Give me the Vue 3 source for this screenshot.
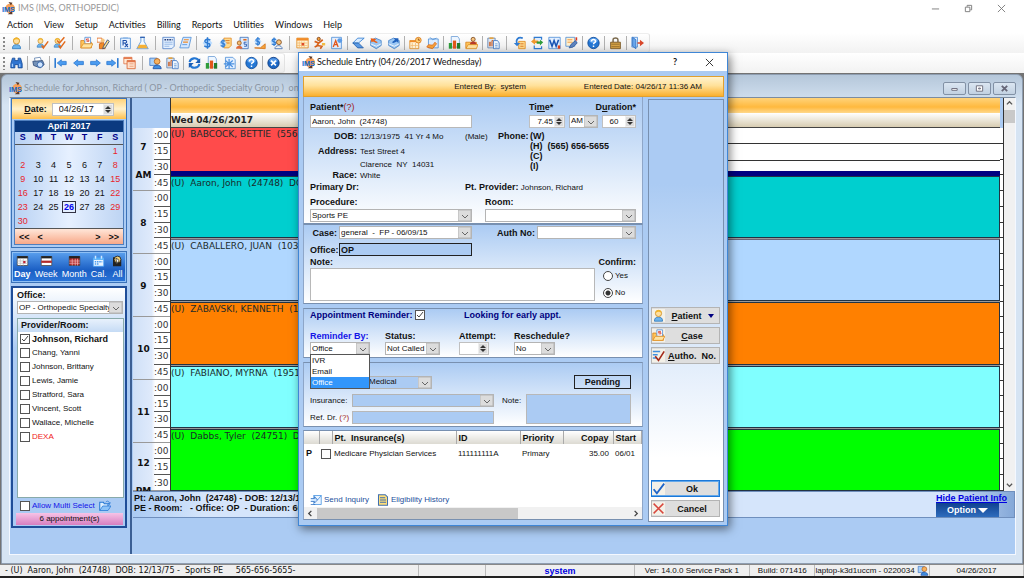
<script setup>
import { ref } from 'vue'

const menus = ['Action', 'View', 'Setup', 'Activities', 'Billing', 'Reports', 'Utilities', 'Windows', 'Help']
const mainTools = [
  'person', '=', 'personcheck', 'doublecheck', '=', 'folder', 'personpen', '-', 'rx', 'flask', '=', 'docabc', 'docs', '-',
  'dollar', 'dollardoc', 'dollarcard', 'dollarhand', 'dollarperson', '=', 'calendar', 'figure', 'adoc', '-',
  'eraser', 'boxin', 'boxout', '-', 'calclock', 'calpen', '-', 'chart', 'folderperson', '-', 'cliptable', '=',
  'note', 'swap', 'word', 'docpen', '-', 'help', '-', 'lock', '-', 'door'
]
const navTools = [
  'binoculars', '-', 'printer', '-', 'first', 'prev', 'next', 'last', 'windows', '=', 'personview', 'cliptable', '-',
  'refresh', 'chart', 'snow', '-', 'help', '-', 'close'
]
const weekdays = ['S', 'M', 'T', 'W', 'T', 'F', 'S']
const weeks = [
  ['', '', '', '', '', '', 1],
  [2, 3, 4, 5, 6, 7, 8],
  [9, 10, 11, 12, 13, 14, 15],
  [16, 17, 18, 19, 20, 21, 22],
  [23, 24, 25, 26, 27, 28, 29],
  [30, '', '', '', '', '', '']
]
const views = [
  { name: 'Day', icon: 'vday' },
  { name: 'Week', icon: 'vweek' },
  { name: 'Month', icon: 'vmonth' },
  { name: 'Cal.', icon: 'vcal' },
  { name: 'All', icon: 'vall' }
]
const providers = ref([
  { name: 'Johnson, Richard', on: true },
  { name: 'Chang, Yanni', on: false },
  { name: 'Johnson, Brittany', on: false },
  { name: 'Lewis, Jamie', on: false },
  { name: 'Stratford, Sara', on: false },
  { name: 'Vincent, Scott', on: false },
  { name: 'Wallace, Michelle', on: false },
  { name: 'DEXA', on: false, red: true }
])
const hours = [
  { h: '7', sub: 'AM', q: [':00', ':15', ':30', ':45'] },
  { h: '8', q: [':00', ':15', ':30', ':45'] },
  { h: '9', q: [':00', ':15', ':30', ':45'] },
  { h: '10', q: [':00', ':15', ':30', ':45'] },
  { h: '11', q: [':00', ':15', ':30', ':45'] },
  { h: '12', sub: 'PM', q: [':00', ':15', ':30'] }
]
const slots = [
  { cls: 'teal', text: '(U)\u00a0 Aaron, John\u00a0 (24748)\u00a0 DOB: 12/13/75' },
  { cls: 'sky', text: '(U)\u00a0 CABALLERO, JUAN\u00a0 (10345)' },
  { cls: 'orange', text: '(U)\u00a0 ZABAVSKI, KENNETH\u00a0 (1024)' },
  { cls: 'cyan', text: '(U)\u00a0 FABIANO, MYRNA\u00a0 (19515)' },
  { cls: 'green', text: '(U)\u00a0 Dabbs, Tyler\u00a0 (24751)\u00a0 DOB: 10/01/82' }
]
const confirm = ref('No')
const reminder = ref('Office')
const reminderOptions = ['IVR', 'Email', 'Office']
</script>

<template>
  <div class="app">
    <svg class="defs" aria-hidden="true">
      <defs>
        <symbol id="logo" viewBox="0 0 16 16">
          <circle cx="10" cy="8" r="6" fill="#f6a05a" />
          <path d="M8 0l5 1-2 3zM7 15l6 0-1-4z" fill="#5b3a2a" />
          <text x="0" y="12" font-family="Liberation Sans, sans-serif" font-weight="700" font-size="9" fill="#1268cc">IMS</text>
        </symbol>
        <symbol id="person" viewBox="0 0 16 16">
          <path d="M3 15c0-4 2-5 5-5s5 1 5 5z" fill="#6db4ec" stroke="#2d78bd" />
          <circle cx="8" cy="5.5" r="3.8" fill="#ffdf9e" stroke="#c98a1d" />
          <path d="M4 5c0-5 8-5 8 0-2-2-5-2-8 0z" fill="#f2b52a" />
        </symbol>
        <symbol id="personcheck" viewBox="0 0 16 16">
          <use href="#person" width="13" height="15" x="-1" y="0" />
          <path d="M7 11l2 3 6-8" fill="none" stroke="#e2691b" stroke-width="1.8" />
        </symbol>
        <symbol id="doublecheck" viewBox="0 0 16 16">
          <use href="#person" width="13" height="15" x="-1" y="0" />
          <path d="M7 11l2 3 6-8M5 5l3 3 6-7" fill="none" stroke="#e2691b" stroke-width="1.8" />
        </symbol>
        <symbol id="folder" viewBox="0 0 16 16">
          <path d="M1 14V5h4l1 2h8v7z" fill="#ffc65a" stroke="#d9831c" />
          <path d="M6 1h7v8H6z" fill="#fff" stroke="#4f8fd6" />
          <path d="M11 3H8v1.500h3V6H8" fill="none" stroke="#d63b2b" />
          <path d="M1 14l3-5h12l-3 5z" fill="#ffe3a0" stroke="#e08e23" />
        </symbol>
        <symbol id="personpen" viewBox="0 0 16 16">
          <path d="M0 2h6v5H0z" fill="#fff" stroke="#e2691b" />
          <path d="M3 15V9l5-2 2 8z" fill="#f08b28" stroke="#c35a12" />
          <circle cx="7" cy="5" r="2.500" fill="#f7c47e" />
          <path d="M8 12l5-8 2 2-5 8-3 1z" fill="#ffe08a" stroke="#2a4577" />
        </symbol>
        <symbol id="rx" viewBox="0 0 16 16">
          <path d="M2 2h12v13H2z" fill="#e9f3ff" stroke="#4f8fd6" />
          <path d="M5 1h6v2H5z" fill="#8fb9e8" />
          <path d="M5 11V5h3c2 0 2 3 0 3H5m2 0l4 5m0-4l-4 4" fill="none" stroke="#1b4da8" stroke-width="1.300" />
        </symbol>
        <symbol id="flask" viewBox="0 0 16 16">
          <path d="M6 1v5L1 15h14L10 6V1z" fill="#f3faff" stroke="#4f8fd6" />
          <path d="M4 10h8l2.500 4.500h-13z" fill="#f6b135" />
          <path d="M5 1h6" stroke="#2d5fb0" stroke-width="1.500" />
        </symbol>
        <symbol id="docabc" viewBox="0 0 16 16">
          <path d="M1 1h14v11l-3 3H1z" fill="#e4f0ff" stroke="#4f7fc6" />
          <path d="M3 4h10" stroke="#273e78" stroke-width="2" stroke-dasharray="2 1" />
          <path d="M3 7h10M3 9.500h10M3 12h6" stroke="#86aee2" />
        </symbol>
        <symbol id="docs" viewBox="0 0 16 16">
          <path d="M5 1h10l-3 13H1z" fill="#d5e8ff" stroke="#4f8fd6" />
          <path d="M6 4h6M5 7h6" stroke="#f08b28" stroke-width="1.500" />
          <path d="M4 10h6" stroke="#4f8fd6" />
        </symbol>
        <symbol id="dollar" viewBox="0 0 16 16">
          <path d="M8 1l6 7-6 7-6-7z" fill="#b9dcff" />
          <path d="M11.500 4.500C8 2 4 4 5 6.500c1 2 6 1 6 4s-4 3-7 1M8 1v14" fill="none" stroke="#2f7bd2" stroke-width="1.800" />
        </symbol>
        <symbol id="dollardoc" viewBox="0 0 16 16">
          <path d="M6 2h9v9l-3 3H6z" fill="#ffd98b" stroke="#e28a20" />
          <path d="M8 5h5M8 8h5" stroke="#d66b18" />
          <use href="#dollar" width="12" height="13" x="-1" y="2" />
        </symbol>
        <symbol id="dollarcard" viewBox="0 0 16 16">
          <path d="M5 1h10v14H5z" fill="#dcecff" stroke="#3c70b8" />
          <path d="M9 4h4" stroke="#e2691b" stroke-width="2" />
          <circle cx="4" cy="8" r="2.500" fill="#f4bb70" stroke="#9f5a1b" />
          <path d="M0 15c0-5 8-5 8 0z" fill="#e06a3a" />
          <path d="M13 7h-3v2.500h3V12h-3" fill="none" stroke="#1b4da8" />
        </symbol>
        <symbol id="dollarhand" viewBox="0 0 16 16">
          <use href="#dollar" width="12" height="12" x="0" y="0" />
          <path d="M2 14h7l6-5v6z" fill="#f6a33a" stroke="#d4741b" />
        </symbol>
        <symbol id="dollarperson" viewBox="0 0 16 16">
          <use href="#dollar" width="12" height="13" x="-1" y="0" />
          <circle cx="11" cy="7" r="3" fill="#f7c47e" stroke="#77461d" />
          <path d="M6 15c0-5 9-5 9 0z" fill="#f2f2f2" stroke="#3b6bb0" />
        </symbol>
        <symbol id="calendar" viewBox="0 0 16 16">
          <path d="M1 2h14v12H1z" fill="#fff4d8" stroke="#e28a20" />
          <path d="M1 3.500h14" stroke="#f08b28" stroke-width="3" />
          <path d="M4 6v8M7 6v8M10 6v8M1 8h13M1 11h13" stroke="#f5bd73" />
          <path d="M7 8h3v3H7z" fill="#e04b2b" />
        </symbol>
        <symbol id="figure" viewBox="0 0 16 16">
          <circle cx="7" cy="3" r="2" fill="#f6a33a" stroke="#7b3b12" />
          <path d="M2 6l5 2 5-4M7 8l-2 3 6 1-2 3M2 13l4-2" fill="none" stroke="#d8621b" stroke-width="2" />
          <path d="M11 8h4v3h-4z" fill="#f3bd43" />
        </symbol>
        <symbol id="adoc" viewBox="0 0 16 16">
          <path d="M2 1h12v14H2z" fill="#e4f0ff" stroke="#4f8fd6" />
          <path d="M4 13l3-8 3 8M5 10h4" fill="none" stroke="#e2561b" stroke-width="1.600" />
          <circle cx="12" cy="5" r="3" fill="#5b9be6" />
        </symbol>
        <symbol id="eraser" viewBox="0 0 16 16">
          <path d="M7 2h8L8 8H1z" fill="#d9ecff" stroke="#2f7bd2" />
          <path d="M1 8h7l6 6H7z" fill="#5b9be6" stroke="#245ea8" />
        </symbol>
        <symbol id="boxin" viewBox="0 0 16 16">
          <path d="M2 5l6-3 7 3v6l-6 4-7-4z" fill="#9cc8f5" stroke="#4682c8" />
          <path d="M2 9l7 3 6-3" fill="none" stroke="#fff" />
          <path d="M2 2l7 1-2 2 4 2-2 1-4-2-2 1z" fill="#e8601b" />
        </symbol>
        <symbol id="boxout" viewBox="0 0 16 16">
          <path d="M2 5l6-3 7 3v6l-6 4-7-4z" fill="#9cc8f5" stroke="#4682c8" />
          <path d="M2 9l7 3 6-3" fill="none" stroke="#fff" />
          <path d="M14 2l-6 0 2 2-4 3 2 1 4-2 2 2z" fill="#1f61bd" />
        </symbol>
        <symbol id="calclock" viewBox="0 0 16 16">
          <path d="M1 5h11v10H1z" fill="#fff4d8" stroke="#e28a20" />
          <path d="M1 6h11" stroke="#f08b28" stroke-width="2" />
          <path d="M4 8v6M8 8v6M2 11h9" stroke="#f5bd73" />
          <circle cx="11.500" cy="4.500" r="3.500" fill="#ffcf70" stroke="#d9751b" />
          <path d="M11.500 2.500v2h2" fill="none" stroke="#8b3a10" />
        </symbol>
        <symbol id="calpen" viewBox="0 0 16 16">
          <path d="M3 3h12v11H3z" fill="#dcecff" stroke="#4f8fd6" />
          <path d="M5 1l3 3 5-2" fill="none" stroke="#4f8fd6" />
          <path d="M1 13c3-7 6 2 10-6l2 2-5 6z" fill="#f6a33a" stroke="#e06a1b" />
        </symbol>
        <symbol id="chart" viewBox="0 0 16 16">
          <path d="M4 0h8l2 3v10H4z" fill="#eef6ff" stroke="#6f9fd6" />
          <path d="M1 8h4v7H1z" fill="#2f9c3a" />
          <path d="M6 5h4v10H6z" fill="#e2561b" />
          <path d="M11 8h4v7h-4z" fill="#247d2c" />
        </symbol>
        <symbol id="folderperson" viewBox="0 0 16 16">
          <path d="M1 14V7h13v7z" fill="#ffc65a" stroke="#d9831c" />
          <circle cx="10" cy="3.500" r="2.500" fill="#f7c47e" stroke="#77461d" />
          <path d="M6 10c0-5 8-5 8 0z" fill="#b83b2b" />
          <path d="M1 15l3-5h12l-2 5z" fill="#ffe3a0" stroke="#e08e23" />
        </symbol>
        <symbol id="cliptable" viewBox="0 0 16 16">
          <path d="M1 2h9v12H1z" fill="#dfe9f5" stroke="#5f80ad" />
          <path d="M3 1h5v2H3z" fill="#e8a23a" />
          <path d="M3 12V7h1.500v5M6 12V5h1.500v7" stroke="#c9571b" fill="none" />
          <path d="M8 5h5l2 3v7H8z" fill="#eef6ff" stroke="#3f76c4" />
          <path d="M10 9h3M10 11h3M10 13h3" stroke="#6f9fd6" />
        </symbol>
        <symbol id="note" viewBox="0 0 16 16">
          <path d="M7 6h8v9H7z" fill="#ffd98b" stroke="#e28a20" />
          <path d="M9 9h4M9 12h4" stroke="#d66b18" />
          <path d="M12 2C6 0 3 4 5 9" fill="none" stroke="#2f7bd2" stroke-width="2" />
          <path d="M1 8h8l-4 4z" fill="#2f7bd2" />
        </symbol>
        <symbol id="swap" viewBox="0 0 16 16">
          <path d="M4 5V1h9v3" fill="#dcecff" stroke="#2f7bd2" stroke-width="1.500" />
          <path d="M0 6l5-4v3h4v3H5v2z" fill="#f2982c" />
          <path d="M7 6h4V4l4 3-4 4V9H7z" fill="#2f9c3a" />
          <path d="M4 11v4h9v-3" fill="none" stroke="#2f7bd2" stroke-width="1.500" />
        </symbol>
        <symbol id="word" viewBox="0 0 16 16">
          <path d="M1 1h14v14H1z" fill="#e4f0ff" stroke="#4f8fd6" />
          <path d="M2 4l3 8 2.500-7L10 12l3-8" fill="none" stroke="#1b55b5" stroke-width="2" />
          <path d="M12 11h3v4h-3z" fill="#e2401b" />
        </symbol>
        <symbol id="docpen" viewBox="0 0 16 16">
          <path d="M1 1h11v11H1z" fill="#fff0cf" stroke="#4f8fd6" />
          <path d="M3 4h6M3 7h6" stroke="#f08b28" />
          <path d="M5 14l3-5 5-4 2 3-5 5z" fill="#5f84bf" stroke="#2f5a9c" />
          <path d="M14 1v4" stroke="#d93a20" stroke-width="2" />
        </symbol>
        <symbol id="help" viewBox="0 0 16 16">
          <circle cx="8" cy="8" r="7" fill="#2477d4" stroke="#0f4a98" />
          <ellipse cx="8" cy="5" rx="5" ry="3" fill="#64a8f2" />
          <path d="M5.500 6c0-3 5-3 5 0 0 1.500-2.500 1.800-2.500 3.500M8 11v2" fill="none" stroke="#fff" stroke-width="1.800" />
        </symbol>
        <symbol id="lock" viewBox="0 0 16 16">
          <path d="M5 7V4c0-3 6-3 6 0v3" fill="none" stroke="#7b6a4d" stroke-width="1.800" />
          <path d="M2 7h12v8H2z" fill="#d9a548" stroke="#6f4e1b" />
          <path d="M3 9.500h10M3 12.500h10" stroke="#8f6a2a" />
        </symbol>
        <symbol id="door" viewBox="0 0 16 16">
          <path d="M1 1h7v12H1z" fill="#dcecff" stroke="#4f8fd6" />
          <path d="M2 1l4 3v11l-4-3z" fill="#6aa8ec" stroke="#2f6fc0" />
          <path d="M8 7h3V4l5 4-5 4V9H8z" fill="#d9482b" />
        </symbol>
        <symbol id="binoculars" viewBox="0 0 16 16">
          <path d="M3 2h3v3h4V2h3l2 7v5h-5v-4H6v4H1V9z" fill="#2f74d0" stroke="#174b98" />
          <path d="M3 9v4M12 9v4" stroke="#9ccaff" stroke-width="1.500" />
        </symbol>
        <symbol id="printer" viewBox="0 0 16 16">
          <path d="M3 2l7-1 2 5-8 1z" fill="#fff" stroke="#5f80ad" />
          <path d="M1 6l12-1 2 5-5 4-8-3z" fill="#7592b8" stroke="#2d4a78" />
          <circle cx="10" cy="10" r="3.500" fill="#cfe5ff" stroke="#2658a0" />
        </symbol>
        <symbol id="prev" viewBox="0 0 16 16"><path d="M2 8l5-4v2h7v4H7v2z" fill="#4a9bf0" stroke="#2f7bd2" /></symbol>
        <symbol id="next" viewBox="0 0 16 16"><path d="M14 8L9 4v2H2v4h7v2z" fill="#4a9bf0" stroke="#2f7bd2" /></symbol>
        <symbol id="first" viewBox="0 0 16 16"><path d="M4 8l5-4v2h6v4H9v2z" fill="#4a9bf0" stroke="#2f7bd2" /><path d="M1.500 2v12" stroke="#2f7bd2" stroke-width="2" /></symbol>
        <symbol id="last" viewBox="0 0 16 16"><path d="M12 8L7 4v2H1v4h6v2z" fill="#4a9bf0" stroke="#2f7bd2" /><path d="M14.500 2v12" stroke="#2f7bd2" stroke-width="2" /></symbol>
        <symbol id="windows" viewBox="0 0 16 16">
          <path d="M1 1h10v8H1z" fill="#ffe9d5" stroke="#e2764a" /><path d="M1 2h10" stroke="#e2764a" stroke-width="2" />
          <path d="M5 5h10v10H5z" fill="#ffe0cc" stroke="#d9622f" /><path d="M5 6h10" stroke="#e2764a" stroke-width="2" />
          <path d="M8 9h5M8 12h5" stroke="#e79a70" />
        </symbol>
        <symbol id="personview" viewBox="0 0 16 16">
          <path d="M1 2h9v9H1z" fill="#a8d0f8" stroke="#3f76c4" />
          <circle cx="10" cy="6" r="3.500" fill="#f7b25e" stroke="#b0601b" />
          <path d="M5 15c0-6 10-6 10 0z" fill="#3f8fe0" stroke="#1b4da8" />
        </symbol>
        <symbol id="refresh" viewBox="0 0 16 16">
          <path d="M2 7c1-6 9-6 11-2M14 9c-1 6-9 6-11 2" fill="none" stroke="#2477d4" stroke-width="2.600" />
          <path d="M15 2v6H9zM1 14V8h6z" fill="#1a5db5" />
        </symbol>
        <symbol id="snow" viewBox="0 0 16 16">
          <path d="M3 1h9l3 3v11H3z" fill="#e4f0ff" stroke="#4f8fd6" />
          <path d="M1 9h13M7.500 3v12M3 5l9 8M12 5l-9 8" stroke="#4a90e0" stroke-width="1.500" />
        </symbol>
        <symbol id="close" viewBox="0 0 16 16">
          <circle cx="8" cy="8" r="7" fill="#1b66c4" stroke="#0c3a80" />
          <ellipse cx="8" cy="5" rx="5" ry="3" fill="#5c9dea" />
          <path d="M5 5l6 6M11 5l-6 6" stroke="#fff" stroke-width="2" />
        </symbol>
        <symbol id="vday" viewBox="0 0 16 16"><path d="M1 2h14v12H1z" fill="#fff" stroke="#444" /><path d="M1 3h14" stroke="#222" stroke-width="3" /><path d="M5 5v9M9 5v9M1 8h14M1 11h14" stroke="#bbb" /><path d="M9 8h3v3H9z" fill="#b23" /></symbol>
        <symbol id="vweek" viewBox="0 0 16 16"><path d="M1 2h14v12H1z" fill="#fff" stroke="#444" /><path d="M1 3h14" stroke="#222" stroke-width="3" /><path d="M1 9h14" stroke="#b12a2a" stroke-width="3" /></symbol>
        <symbol id="vmonth" viewBox="0 0 16 16"><path d="M1 2h14v12H1z" fill="#b12a2a" stroke="#444" /><path d="M1 3h14" stroke="#222" stroke-width="3" /><path d="M5 5v9M9 5v9M12 5v9M1 8h14M1 11h14" stroke="#f0b0b0" /></symbol>
        <symbol id="vcal" viewBox="0 0 16 16"><path d="M1 4h14v11H1z" fill="#eaf5ff" stroke="#3f9cf5" /><path d="M1 5h14" stroke="#52aef8" stroke-width="3" /><path d="M4 1v4M12 1v4" stroke="#cfe8ff" stroke-width="2" /><path d="M3 9h10M3 12h6" stroke="#4a9bf0" stroke-width="2" stroke-dasharray="2 1" /></symbol>
        <symbol id="vall" viewBox="0 0 16 16"><path d="M2 3h7l4 3v9H2z" fill="#222" /><circle cx="8" cy="6" r="4.500" fill="#f0cf78" stroke="#111" /><path d="M6 4l4 3-3 5z" fill="#fff" stroke="#333" /></symbol>
        <symbol id="openfolder" viewBox="0 0 16 16"><path d="M1 14V3h5l1 2h5v3" fill="#dff0ff" stroke="#2477d4" stroke-width="1.400" /><path d="M1 14l4-6h11l-4 6z" fill="#8cc3f8" stroke="#2477d4" /><path d="M9 3c2-3 5-1 5 2m-2-1l2 2 1-3" fill="none" stroke="#2477d4" /></symbol>
        <symbol id="autho" viewBox="0 0 16 16"><path d="M1 3h9M1 7h6M1 11h4" stroke="#3f8fe0" stroke-width="2" /><path d="M4 9l4 5 7-11" fill="none" stroke="#a32a1b" stroke-width="2" /></symbol>
        <symbol id="ok" viewBox="0 0 16 16"><path d="M2 9l4 5L15 2" fill="none" stroke="#1e64c8" stroke-width="2.200" /></symbol>
        <symbol id="cancel" viewBox="0 0 16 16"><path d="M2 2l12 12M14 2L2 14" stroke="#d8463c" stroke-width="1.800" /></symbol>
        <symbol id="send" viewBox="0 0 16 16"><path d="M5 2h10v12H5z" fill="#eaf4ff" stroke="#3f8fe0" /><path d="M5 2l5 6 5-6" fill="none" stroke="#3f8fe0" /><path d="M1 6h5V4l4 4-4 4v-2H1M1 14h6" fill="#cfe6ff" stroke="#2f6fc0" /></symbol>
        <symbol id="history" viewBox="0 0 16 16"><path d="M2 1h9l3 3v11H2z" fill="#ffdf7a" stroke="#3f6fb0" stroke-width="1.400" /><path d="M4 5h7M4 8h8M4 11h8" stroke="#3f6fb0" stroke-width="1.400" /></symbol>
      </defs>
    </svg>

    <header class="titlebar">
      <svg class="logo"><use href="#logo" /></svg>
      <span class="title">IMS (IMS, ORTHOPEDIC)</span>
      <button class="win" aria-label="Minimize"><svg viewBox="0 0 10 10"><path d="M1 5.500h8" stroke="#777" /></svg></button>
      <button class="win" aria-label="Restore"><svg viewBox="0 0 10 10"><path d="M1.500 3.500h5v5h-5zM3.500 3V1.500h5v5H7" fill="none" stroke="#777" /></svg></button>
      <button class="win" aria-label="Close"><svg viewBox="0 0 10 10"><path d="M1 1l8 8M9 1L1 9" stroke="#777" /></svg></button>
    </header>
    <nav class="menubar">
      <button v-for="m in menus" :key="m">{{ m }}</button>
    </nav>
    <div class="toolrow">
      <div class="tools main">
        <i class="grip"></i>
        <template v-for="(t, i) in mainTools" :key="i">
          <i v-if="t === '-' || t === '='" class="sep" :class="{ wide: t === '=' }"></i>
          <button v-else class="tool" :aria-label="t"><svg><use :href="'#' + t" /></svg></button>
        </template>
      </div>
    </div>
    <div class="toolrow">
      <div class="tools nav">
        <i class="grip"></i>
        <template v-for="(t, i) in navTools" :key="i">
          <i v-if="t === '-' || t === '='" class="sep" :class="{ wide: t === '=' }"></i>
          <button v-else class="tool" :aria-label="t"><svg><use :href="'#' + t" /></svg></button>
        </template>
      </div>
    </div>

    <main class="mdi">
      <section class="child">
        <div class="childtitle">
          <svg class="logo"><use href="#logo" /></svg>
          <span class="title">Schedule for Johnson, Richard ( OP - Orthopedic Specialty Group )&nbsp; on 04/26/2017</span>
          <button class="cwin" aria-label="Minimize schedule"><svg viewBox="0 0 10 10"><path d="M2 5h6v2H2z" fill="#fff" stroke="#667" /></svg></button>
          <button class="cwin" aria-label="Maximize schedule"><svg viewBox="0 0 10 10"><path d="M1.500 2h7v6h-7zM4 4.500h2v1H4z" fill="#fff" stroke="#667" /></svg></button>
          <button class="cwin" aria-label="Close schedule"><svg viewBox="0 0 10 10"><path d="M2 2l6 6M8 2L2 8" stroke="#667" stroke-width="2" /></svg></button>
        </div>
        <div class="workspace">
          <aside class="side">
            <div class="calbox">
              <div class="datebar">
                <label for="date"><u>D</u>ate:</label>
                <span class="spin datespin"><input id="date" value="04/26/17"><span><button aria-label="Next date"></button><button class="dn" aria-label="Previous date"></button></span></span>
              </div>
              <div class="cal">
                <div class="calhead">April 2017</div>
                <table>
                  <thead><tr><th v-for="(d, i) in weekdays" :key="i">{{ d }}</th></tr></thead>
                  <tbody>
                    <tr v-for="(w, i) in weeks" :key="i">
                      <td v-for="(d, j) in w" :key="j" :class="{ holiday: j === 0 || j === 6 }"><b v-if="d === 26">26</b><template v-else>{{ d }}</template></td>
                    </tr>
                  </tbody>
                </table>
                <div class="calnav"><button>&lt;&lt;</button><button>&lt;</button><i></i><button>&gt;</button><button>&gt;&gt;</button></div>
              </div>
            </div>
            <div class="views">
              <button v-for="v in views" :key="v.name" :class="{ on: v.name === 'Day' }"><svg><use :href="'#' + v.icon" /></svg>{{ v.name }}</button>
            </div>
            <div class="filter">
              <label class="b" for="office">Office:</label>
              <select id="office"><option>OP - Orthopedic Specialty</option></select>
              <div class="plist">
                <div class="phead">Provider/Room:</div>
                <label v-for="p in providers" :key="p.name" :class="{ chosen: p.on, redt: p.red }"><input v-model="p.on" type="checkbox">{{ p.name }}</label>
              </div>
              <label class="multi"><input type="checkbox">Allow Multi Select<svg><use href="#openfolder" /></svg></label>
              <div class="count">6 appointment(s)</div>
            </div>
          </aside>

          <div class="sched">
            <div class="grid">
              <div class="gutter">
                <div class="corner"></div>
                <div class="hours">
                  <div v-for="h in hours" :key="h.h" class="hour" :class="{ short: h.q.length === 3 }">
                    <div class="hl" :class="{ period: h.sub }"><b>{{ h.h }}</b><b v-if="h.sub">{{ h.sub }}</b></div>
                    <div class="ql"><span v-for="q in h.q" :key="q">{{ q }}</span></div>
                  </div>
                </div>
              </div>
              <div class="day">
                <div class="dayorange"></div>
                <div class="dayname">Wed 04/26/2017</div>
                <div class="appts">
                  <div class="early">
                    <div class="appt red">(U)&nbsp; BABCOCK, BETTIE&nbsp; (5567)</div>
                    <div class="free"><i></i><i></i><i class="part"></i></div>
                  </div>
                  <div class="navy"></div>
                  <div v-for="s in slots" :key="s.cls" class="appt" :class="s.cls">{{ s.text }}</div>
                </div>
              </div>
              <div class="edge"><div class="edgehead"></div><i v-for="n in 23" :key="n"></i></div>
              <div class="vscroll"><svg viewBox="0 0 8 8"><path d="M1 5l3-3 3 3" fill="none" stroke="#555" stroke-width="1.500" /></svg><i></i><svg class="bot" viewBox="0 0 8 8"><path d="M1 2l3 3 3-3" fill="none" stroke="#555" stroke-width="1.500" /></svg></div>
            </div>
            <div class="info">
              <p>Pt: Aaron, John&nbsp; (24748) - DOB: 12/13/1975<br>PE - Room:&nbsp; &nbsp;- Office: OP&nbsp; - Duration: 60</p>
              <div class="infor"><a href="#">Hide Patient Info</a><button>Option <i></i></button></div>
            </div>
          </div>
        </div>
      </section>
    </main>

    <footer class="status">
      <span class="s1">- (U)&nbsp; Aaron, John&nbsp; (24748)&nbsp; DOB: 12/13/75 -&nbsp; Sports PE &nbsp; &nbsp; 565-656-5655-</span>
      <span class="s2"></span>
      <span class="s3">system</span>
      <span class="s4">Ver: 14.0.0 Service Pack 1</span>
      <span class="s5">Build: 071416</span>
      <span class="s6">laptop-k3d1uccm - 0220034<svg><use href="#personview" /></svg></span>
      <span class="s7">04/26/2017</span>
    </footer>

    <section class="dialog" role="dialog" aria-label="Schedule Entry">
      <div class="dtitle">
        <svg class="logo"><use href="#logo" /></svg>
        <span>Schedule Entry (04/26/2017 Wednesday)</span>
        <button aria-label="Help">?</button>
        <button aria-label="Close dialog"><svg viewBox="0 0 10 10"><path d="M1 1l8 8M9 1L1 9" stroke="#222" /></svg></button>
      </div>
      <div class="dbody">
        <div class="entered"><span>Entered By:&nbsp; system</span><span>Entered Date: 04/26/17 11:36 AM</span></div>
        <div class="cols">
          <div class="forms">
            <div class="panel pa">
              <div class="top lab"><label for="patient">Patient*<em>(?)</em></label><label class="c3" for="time">Ti<u>m</u>e*</label><label class="c5" for="dur">D<u>u</u>ration*</label></div>
              <div class="top">
                <input id="patient" class="tx" value="Aaron, John  (24748)">
                <span class="spin c3"><input id="time" class="r" value="7.45"><span><button aria-label="Later"></button><button class="dn" aria-label="Earlier"></button></span></span>
                <select aria-label="AM or PM"><option>AM</option></select>
                <span class="spin"><input id="dur" class="mid" value="60"><span><button aria-label="Longer"></button><button class="dn" aria-label="Shorter"></button></span></span>
              </div>
              <div class="det">
                <b class="k">DOB:</b><span>12/13/1975&nbsp; 41 Yr 4 Mo</span><span>(Male)</span><b>Phone:</b>
                <b class="phones">(W)<br>(H)&nbsp; (565) 656-5655<br>(C)<br>(I)</b>
                <b class="k r2">Address:</b><span class="r2 v">Test Street 4</span>
                <span class="r3 v">Clarence&nbsp; NY&nbsp; 14031</span>
                <b class="k r4">Race:</b><span class="r4 v">White</span>
                <b class="r5 wide">Primary Dr:</b><span class="r5 prov"><b>Pt. Provider:</b> Johnson, Richard</span>
              </div>
              <div class="two lab"><label for="proc">Procedure:</label><label for="room">Room:</label></div>
              <div class="two"><select id="proc"><option>Sports PE</option></select><select id="room"><option></option></select></div>
            </div>

            <div class="panel pb">
              <div class="caserow">
                <label for="case">Case:</label><select id="case"><option>general&nbsp; -&nbsp; FP - 06/09/15</option></select>
                <label for="auth">Auth No:</label><select id="auth"><option></option></select>
              </div>
              <div class="officerow"><label for="off">Office:</label><input id="off" value="OP"></div>
              <div class="notelab"><label for="note">Note:</label><b>Confirm:</b></div>
              <div class="noterow">
                <textarea id="note"></textarea>
                <div class="radios">
                  <label><input v-model="confirm" type="radio" value="Yes">Yes</label>
                  <label><input v-model="confirm" type="radio" value="No">No</label>
                </div>
              </div>
            </div>

            <div class="panel pc">
              <div class="pctop"><label>Appointment Reminder:<input type="checkbox" checked></label><span>Looking for early appt.</span></div>
              <div class="four">
                <div><label class="blue" for="rem">Reminder By:</label>
                  <select id="rem" v-model="reminder"><option v-for="o in reminderOptions" :key="o">{{ o }}</option></select>
                  <ul class="menu" role="listbox"><li v-for="o in reminderOptions" :key="o" role="option" :class="{ on: o === reminder }" @click="reminder = o">{{ o }}</li></ul>
                </div>
                <div><label for="stat">Status:</label><select id="stat"><option>Not Called</option></select></div>
                <div><label for="att">Attempt:</label><span class="spin"><input id="att"><span><button aria-label="More attempts"></button><button class="dn" aria-label="Fewer attempts"></button></span></span></div>
                <div><label for="res">Reschedule?</label><select id="res"><option>No</option></select></div>
              </div>
            </div>

            <div class="panel pd">
              <div class="pdtop"><input type="checkbox" aria-label="Use type"><select aria-label="Type"><option>Medical</option></select><button>Pending</button></div>
              <div class="ins">
                <label for="ins">Insurance:</label><select id="ins"><option></option></select>
                <label class="nl" for="inote">Note:</label><textarea id="inote"></textarea>
                <label for="ref">Ref. Dr. <em>(?)</em></label><input id="ref" class="tx">
              </div>
            </div>

            <div class="panel pe">
              <table>
                <colgroup><col class="w1"><col class="w2"><col class="w3"><col class="w4"><col class="w5"><col class="w6"><col></colgroup>
                <thead><tr><th></th><th></th><th>Pt.&nbsp; Insurance(s)</th><th>ID</th><th>Priority</th><th class="r">Copay</th><th>Start</th></tr></thead>
                <tbody><tr><td><b>P</b></td><td><input type="checkbox" aria-label="Select insurance"></td><td>Medicare Physician Services</td><td>111111111A</td><td>Primary</td><td class="r">35.00</td><td>06/01</td></tr></tbody>
              </table>
              <div class="links"><a href="#"><svg><use href="#send" /></svg>Send Inquiry</a><a href="#"><svg><use href="#history" /></svg>Eligibility History</a></div>
              <div class="hscroll"><svg viewBox="0 0 8 8"><path d="M5 1L2 4l3 3" fill="none" stroke="#444" stroke-width="1.500" /></svg><i></i><svg viewBox="0 0 8 8"><path d="M3 1l3 3-3 3" fill="none" stroke="#444" stroke-width="1.500" /></svg></div>
            </div>
          </div>
          <div class="actions">
            <button><svg><use href="#person" /></svg><span><u>P</u>atient</span><i></i></button>
            <button><svg><use href="#folder" /></svg><span><u>C</u>ase</span></button>
            <button><svg><use href="#autho" /></svg><span><u>A</u>utho.&nbsp; No.</span></button>
            <button class="okb"><svg><use href="#ok" /></svg><span>Ok</span></button>
            <button><svg><use href="#cancel" /></svg><span>Cancel</span></button>
          </div>
        </div>
      </div>
    </section>
  </div>
</template>

<style>
body { margin: 0; background: #fff; }
</style>

<style scoped>
.app { position: relative; display: flex; flex-direction: column; min-height: 100vh; overflow: hidden; background: #fff; color: #111; font: 8px/12px "Liberation Sans", sans-serif; }
.app * { box-sizing: border-box; }
.defs { position: absolute; width: 0; height: 0; }
button, input, select, textarea { font: inherit; color: inherit; margin: 0; padding: 0; border: 0; border-radius: 0; background: none; min-width: 0; }
button { white-space: nowrap; }
b, th, .b { font-family: "Liberation Sans", sans-serif; font-size: 9px; font-weight: 700; }
em { font-style: normal; font-weight: 400; color: #a02020; }
.logo { width: 13px; height: 13px; flex: none; }
select { appearance: none; height: 13px; width: 100%; padding: 0 13px 0 1px; border: 1px solid #b4b4b4; line-height: 10px; color: #111; background: #fff url("data:image/svg+xml,%3Csvg xmlns='http://www.w3.org/2000/svg' width='13' height='11'%3E%3Cpath d='M0 0h13v11H0z' fill='%23dcdcdc' stroke='%23b4b4b4'/%3E%3Cpath d='M4 5l3 3 3-3' fill='none' stroke='%23666'/%3E%3C/svg%3E") right center no-repeat; }
input[type="checkbox"] { appearance: none; width: 10px; height: 10px; flex: none; border: 1px solid #555; background: #fff; }
input[type="checkbox"]:checked { background: #fff url("data:image/svg+xml,%3Csvg xmlns='http://www.w3.org/2000/svg' width='8' height='8'%3E%3Cpath d='M1 4l2 2 4-5' fill='none' stroke='%23444'/%3E%3C/svg%3E") center no-repeat; }
input[type="radio"] { appearance: none; width: 10px; height: 10px; flex: none; border: 1px solid #444; border-radius: 50%; background: #fff; }
input[type="radio"]:checked { background: radial-gradient(circle, #333 0 2px, #fff 3px); }
.spin { display: flex; height: 13px; background: #fff; border: 1px solid #c0c0c0; }
.spin input { width: 100%; flex: 1; line-height: 11px; height: 11px; }
.spin > span { display: flex; flex-direction: column; justify-content: center; gap: 1px; width: 10px; flex: none; background: #dcdcdc; border: 1px solid #eee; align-items: center; }
.spin button { width: 0; height: 0; border: 3px solid transparent; border-top: 0; border-bottom: 3px solid #333; }
.spin button.dn { border: 3px solid transparent; border-bottom: 0; border-top: 3px solid #333; }
input.r { text-align: right; padding-right: 1px; }
input.mid { text-align: center; }

.titlebar { display: flex; align-items: center; height: 16px; padding: 0 8px 0 2px; gap: 3px; font: 9px/12px Lato, sans-serif; }
.titlebar .title { flex: 1; color: #999; }
.win { width: 30px; height: 12px; display: grid; place-items: center; }
.win svg { width: 9px; height: 9px; }
.menubar { display: flex; height: 17px; padding: 0 7px; gap: 11px; align-items: center; font: 9px/14px Lato, sans-serif; }
.toolrow { height: 20px; background: linear-gradient(#fff, #f2f2f2); }
.tools { display: flex; align-items: center; justify-content: space-between; height: 20px; border: 1px solid #e2e2e2; border-left: 0; border-top-color: #eee; border-radius: 0 3px 3px 0; background: linear-gradient(#fff, #ececec); padding: 0 4px 0 3px; }
.tools.main { width: 650px; }
.tools.nav { width: 285px; }
.grip { width: 2px; height: 13px; background: repeating-linear-gradient(#888 0 2px, transparent 2px 4px); margin-right: 1px; }
.sep { width: 1px; height: 14px; background: #b0b0b0; }
.sep.wide { margin: 0 2px; }
.tool { width: 13px; height: 14px; display: block; }
.tool svg { display: block; width: 13px; height: 14px; }

.mdi { flex: 1; display: flex; background: #737373; padding: 1px 0 0 1px; }
.child { flex: 1; display: flex; flex-direction: column; border: 1px solid #8e9db0; border-radius: 6px 6px 0 0; background: linear-gradient(#b5c7da, #d6e4f3 30px); padding: 0 6px 8px 7px; margin-right: 1px; }
.childtitle { display: flex; align-items: center; gap: 2px; height: 22px; padding: 4px 0 0; }
.childtitle .title { flex: 1; color: #8b95a2; font: 9px/12px Lato, sans-serif; white-space: nowrap; }
.cwin { width: 23px; height: 13px; border: 1px solid #8291a5; border-radius: 2px; background: linear-gradient(#dbe6f2, #c2d1e1); display: grid; place-items: center; }
.cwin svg { width: 9px; height: 9px; }
.workspace { flex: 1; display: flex; border: 1px solid #f4f8ff; border-top-color: #7c8ca0; background: #abcbf3; }

.side { flex: none; width: 122px; border-right: 2px solid #3b5f94; padding: 0 3px 26px 1px; display: flex; flex-direction: column; }
.calbox { border: 1px solid #3b72b8; background: #abcbf3; }
.datebar { display: flex; align-items: center; justify-content: center; gap: 5px; height: 20px; background: linear-gradient(#ffd37a, #fff1cc 50%, #ffc04d); font: 700 9px/12px "Liberation Sans", sans-serif; }
.datespin { width: 62px; font: 9px/12px "Liberation Sans", sans-serif; }
.datespin input { padding-left: 6px; }
.cal { margin: 1px 2px 2px; border: 1px solid #4f7fbe; background: linear-gradient(90deg, #b9d2f3, #e6f0ff 50%, #bdd4f3); padding: 0; }
.calhead { background: #0b3a80; color: #fff; text-align: center; font: 700 9px/11px "Liberation Sans", sans-serif; }
.cal table { width: 100%; border-collapse: collapse; table-layout: fixed; padding: 0; }
.cal th { height: 12px; padding: 0; color: #00008b; border-bottom: 1px solid #555; line-height: 11px; }
.cal td { height: 14px; padding: 0; text-align: center; font: 9px/12px "Liberation Sans", sans-serif; }
.cal td.holiday { color: #e8262c; }
.cal td b { display: inline-block; border: 1px solid #334; padding: 0 1px; color: #00e; line-height: 10px; }
.calnav { display: flex; height: 16px; gap: 8px; padding: 0 4px; align-items: center; border-top: 1px solid #555; background: linear-gradient(#ffe6d8, #f8a888); }
.calnav i { flex: 1; }
.calnav button { font: 700 9px/12px "Liberation Sans", sans-serif; }
.views { display: flex; justify-content: space-between; height: 32px; margin-top: 3px; padding: 3px 2px 0; border: 1px solid #3b72b8; background: linear-gradient(#5aa0ee, #1b5fc4 60%, #2a74d8); box-shadow: inset 0 0 0 1px #8fc0f5; color: #fff; }
.views button { display: flex; flex-direction: column; align-items: center; gap: 1px; font: 9px/12px "Liberation Sans", sans-serif; }
.views button.on { font-weight: 700; }
.views svg { width: 13px; height: 12px; }
.filter { flex: 1; display: flex; flex-direction: column; margin-top: 3px; padding: 1px 2px 1px; border: 2px solid #1f4d98; background: linear-gradient(#fff, #abcbf3 60px); }
.filter > label.b { line-height: 12px; padding-left: 2px; }
.filter select { width: 106px; margin-left: 2px; }
.plist { flex: 1; margin: 4px 2px 0; width: 107px; background: #fff; border: 1px solid #8aa; display: flex; flex-direction: column; }
.phead { background: linear-gradient(#e8f1fc, #c5dbf5); padding-left: 3px; font: 700 9px/13px "Liberation Sans", sans-serif; }
.plist label { display: flex; align-items: center; gap: 2px; height: 14px; padding-left: 2px; white-space: nowrap; }
.plist label.chosen { font-weight: 700; font-size: 9px; }
.redt { color: #f02020; }
.multi { display: flex; align-items: center; gap: 2px; height: 15px; padding-left: 5px; color: #1414e8; white-space: nowrap; }
.multi svg { width: 12px; height: 12px; margin-left: 2px; }
.count { height: 12px; margin-left: 1px; text-align: center; background: linear-gradient(#f7c3e6, #d77fc0); }

.sched { flex: 1; display: flex; flex-direction: column; margin-left: 1px; padding-bottom: 36px; min-width: 0; }
.grid { flex: 1; display: flex; min-height: 0; }
.gutter { width: 37px; flex: none; display: flex; flex-direction: column; }
.corner { height: 30px; flex: none; }
.hours { flex: 1; display: flex; flex-direction: column; background: linear-gradient(90deg, #cfe0f7, #dfeafb 50%, #fff 60%); color: #333; overflow: hidden; font-family: "DejaVu Sans", sans-serif; }
.hour { flex: 4; display: flex; border-bottom: 1px solid #999; min-height: 0; }
.hour.short { flex: 3; }
.hl { width: 21px; display: flex; flex-direction: column; align-items: center; justify-content: center; gap: 17px; padding-top: 2px; }
.hl.period { padding-top: 4px; }
.hl b { font: 700 9px/11px "DejaVu Sans", sans-serif; color: #111; }
.short .hl.period { padding-top: 22px; }
.ql { flex: 1; display: flex; flex-direction: column; }
.ql span { flex: 1; border-bottom: 1px solid #555; display: flex; align-items: center; font-size: 9px; line-height: 12px; }
.ql span:last-child { border-bottom: 0; }
.day { flex: 1; display: flex; flex-direction: column; border-left: 1px solid #333; min-width: 0; font: 9px/12px "DejaVu Sans", sans-serif; color: #1a2a2a; }
.dayorange { height: 15px; flex: none; background: linear-gradient(#ffd37a, #ffb93e 60%, #ffd88a); }
.dayname { height: 15px; flex: none; background: linear-gradient(#fff, #d8cdb2); font-weight: 700; line-height: 15px; color: #222; border-bottom: 1px solid #444; }
.appts { flex: 1; display: flex; flex-direction: column; background: #999; min-height: 0; }
.early { flex: 43; display: flex; min-height: 0; }
.early .appt { flex: 1; border: 0; margin: 0; }
.free { flex: 1; background: #fff; display: flex; flex-direction: column; }
.free i { flex: 16; border-bottom: 1px solid #333; }
.free i.part { flex: 11; border: 0; }
.navy { flex: 5; background: #000080; }
.appt { flex: 60; border: 1px solid #234; border-left: 0; margin-bottom: 1px; white-space: nowrap; overflow: hidden; min-height: 0; }
.red { background: #ff4b4b; }
.teal { background: #00cfcf; }
.sky { background: #b0d7ff; border-top-color: #667; }
.orange { background: #ff8000; }
.cyan { background: #80ffff; }
.green { background: #00ff00; margin-bottom: 0; }
.edge { width: 4px; display: flex; flex-direction: column; background: #fff; border-right: 1px solid #333; }
.edgehead { height: 30px; flex: none; background: #abcbf3; }
.edge i { flex: 1; border-bottom: 1px solid #333; }
.vscroll { width: 11px; display: flex; flex-direction: column; align-items: center; background: #f1f1f1; padding: 2px 0; }
.vscroll svg { width: 7px; height: 7px; }
.vscroll i { width: 11px; height: 13px; margin-top: 3px; background: #c9c9c9; }
.vscroll .bot { margin-top: auto; }
.info { display: flex; justify-content: space-between; height: 27px; padding: 1px 7px 0 1px; border: 1px solid #6f8fbd; border-left: 0; background: linear-gradient(90deg, #abcbf3, #d5e5fb 8%, #d5e5fb 92%, #84a8d8); }
.info p { margin: 0; font: 700 9px/10px "Liberation Sans", sans-serif; white-space: nowrap; }
.infor { display: flex; flex-direction: column; align-items: flex-start; font: 700 9px/10px "Liberation Sans", sans-serif; }
.infor a { color: #0000e0; }
.infor button { width: 63px; height: 14px; color: #fff; background: linear-gradient(#10418f, #2f6dbd); display: flex; align-items: center; justify-content: center; gap: 2px; }
.infor button i { border: 5px solid transparent; border-top-color: #fff; border-bottom: 0; }

.status { display: flex; height: 14px; background: #efefef; border-top: 1px solid #888; border-bottom: 2px solid #222; line-height: 12px; }
.status span { border-right: 1px solid #bbb; white-space: nowrap; overflow: hidden; min-width: 0; }
.s1 { flex: 418; padding-left: 5px; font: 8px/12px "DejaVu Sans", sans-serif; }
.s2 { flex: 67; }
.s3 { flex: 149; text-align: center; font: 700 9px/12px "Liberation Sans", sans-serif; color: #0000e0; }
.s4 { flex: 116; text-align: center; }
.s5 { flex: 65; text-align: center; }
.s6 { flex: 115; display: flex; align-items: center; justify-content: space-between; }
.s6 svg { width: 12px; height: 11px; }
.s7 { flex: 94; text-align: center; }

.dialog { position: absolute; left: 298px; top: 52px; width: 430px; border: 1px solid #3f86d6; background: #abcbf3; box-shadow: 2px 3px 9px rgba(0, 0, 0, .5); }
.dtitle { display: flex; align-items: center; height: 18px; padding: 0 12px 0 3px; gap: 2px; background: #fff; font: 9px/12px Lato, sans-serif; }
.dtitle span { flex: 1; }
.dtitle button { width: 32px; height: 14px; font-weight: 700; display: grid; place-items: center; }
.dtitle button svg { width: 9px; height: 9px; }
.dtitle button:last-child { width: 12px; margin-left: 10px; }
.dbody { padding: 5px 3px 3px 4px; }
.entered { display: flex; justify-content: flex-end; gap: 58px; align-items: center; height: 21px; padding-right: 21px; border: 1px solid #e0a030; background: linear-gradient(#fff3cf, #ffe19a 45%, #fbb02e); }
.cols { display: flex; gap: 5px; }
.forms { flex: 1; min-width: 0; padding-bottom: 2px; }
.forms label, .pctop { font: 700 9px/12px "Liberation Sans", sans-serif; white-space: nowrap; }
.panel { border: 1px solid #7898c8; border-color: #7890b0 #8ea6c8; background: linear-gradient(#abcbf3, #fff); padding: 0 6px; }
.pa { padding: 3px 6px 1px; border-top: 0; }
.top { display: grid; grid-template-columns: 162px 1fr 36px 29px 34px; column-gap: 4px; height: 14px; align-items: center; }
.c3 { grid-column: 3; }
.c5 { grid-column: 5; justify-self: end; }
.tx { width: 100%; height: 13px; border: 1px solid #b8b8b8; background: #fff; padding: 0 1px; white-space: pre; }
.det { display: grid; grid-template-columns: 47px 102px 30px 29px 1fr; grid-template-rows: 15px 15px 11px 11px 12px; column-gap: 3px; align-items: center; white-space: nowrap; margin: 1px 0 3px; line-height: 11px; }
.k { text-align: right; }
.phones { grid-row: 1 / span 4; grid-column: 5; align-self: start; padding-top: 2px; line-height: 10px; }
.r2 { grid-row: 2; }
.r3 { grid-row: 3; }
.r4 { grid-row: 4; }
.r5 { grid-row: 5; }
.k.r2, .k.r4 { grid-column: 1; }
.v { grid-column: 2 / span 3; }
.wide.r5 { grid-column: 1 / span 2; }
.prov { grid-column: 3 / span 3; }
.two { display: grid; grid-template-columns: 162px 1fr; column-gap: 13px; }
.two.lab { height: 13px; }
.pb { border-top: 1px solid #7890b0; padding: 1px 6px 2px; margin-bottom: 4px; }
.caserow { display: grid; grid-template-columns: 27px 133px 61px 1fr; column-gap: 2px; align-items: center; }
.caserow label { text-align: right; }
.officerow { display: grid; grid-template-columns: 29px 133px; align-items: center; margin-top: 4px; }
.officerow input { height: 13px; border: 1px solid #222; background: #abcbf3; font: 700 9px/11px "Liberation Sans", sans-serif; padding: 0 1px; }
.notelab { display: flex; justify-content: space-between; height: 12px; line-height: 12px; }
.noterow { display: flex; gap: 8px; }
.noterow textarea { flex: 1; height: 33px; border: 1px solid #b8b8b8; background: #fff; resize: none; display: block; }
.radios { width: 33px; display: flex; flex-direction: column; justify-content: space-around; }
.forms .radios label { display: flex; align-items: center; gap: 2px; font: inherit; }
.pc { padding: 0 6px 2px; margin-bottom: 4px; }
.pctop { display: grid; grid-template-columns: 154px 1fr; color: #00007f; }
.pctop label { display: flex; align-items: center; gap: 2px; }
.four { display: grid; grid-template-columns: 60px 55px 30px 41px; column-gap: 15px; margin-top: 9px; }
.four > div { position: relative; display: flex; flex-direction: column; }
.four > div:nth-child(3) { margin-left: 4px; margin-right: -4px; }
.four > div:nth-child(4) { margin-left: 14px; margin-right: -14px; }
.four .blue { color: #1414e8; }
.menu { position: absolute; z-index: 2; top: 24px; left: 0; width: 60px; margin: 0; padding: 0; list-style: none; background: #fff; border: 1px solid #555; line-height: 11px; }
.menu li { padding-left: 1px; height: 11px; }
.menu li.on { background: #3296fa; color: #fff; }
.pd { padding: 12px 11px 2px 6px; margin-bottom: 3px; }
.pdtop { display: flex; align-items: center; padding-left: 42px; gap: 5px; }
.pdtop select { width: 65px; background-color: #abcbf3; }
.pdtop button { margin-left: auto; width: 57px; height: 14px; border: 1px solid #222; font: 700 9px/12px "Liberation Sans", sans-serif; }
.ins { display: grid; grid-template-columns: 40px 142px 24px 1fr; column-gap: 2px; row-gap: 4px; margin-top: 5px; align-items: center; }
.forms .ins label { font: inherit; }
.ins select, .ins .tx, .ins textarea { background-color: #abcbf3; }
.forms .ins .nl { padding-left: 6px; }
.ins textarea { grid-row: 1 / span 2; grid-column: 4; margin-left: 4px; height: 30px; border: 1px solid #b8b8b8; resize: none; }
.pe { background: #fff; padding: 0; overflow: hidden; }
.pe table { width: 100%; border-collapse: collapse; table-layout: fixed; }
.pe th { text-align: left; padding: 0 2px; height: 13px; line-height: 12px; background: linear-gradient(#fff, #dcdad2); border-right: 1px solid #aaa; white-space: nowrap; overflow: hidden; }
.pe th.r, .pe td.r { text-align: right; padding-right: 4px; }
.pe td { padding: 3px 2px; height: 18px; white-space: nowrap; overflow: hidden; }
.pe td input { display: block; }
.w1 { width: 15px; }
.w2 { width: 13px; }
.w3 { width: 124px; }
.w4 { width: 64px; }
.w5 { width: 43px; }
.w6 { width: 50px; }
.links { display: flex; gap: 8px; margin-top: 30px; padding-left: 6px; height: 14px; }
.links a { display: flex; align-items: center; gap: 2px; color: #1c4f9c; text-decoration: none; }
.links svg { width: 12px; height: 12px; }
.hscroll { display: flex; align-items: center; height: 12px; padding: 0 3px; background: #f1f1f1; }
.hscroll svg { width: 7px; height: 7px; }
.hscroll i { width: 201px; height: 11px; margin: 0 auto 0 3px; background: #c8c8c8; }
.actions { width: 76px; flex: none; display: flex; flex-direction: column; gap: 3px; margin-top: 2px; padding: 207px 3px 4px 2px; border: 1px solid #7890b0; background: linear-gradient(#abcbf3 20%, #fff 85%); }
.actions button { position: relative; height: 17px; display: flex; align-items: center; background: #dedede; border: 1px solid #b4b4b4; font: 700 9px/12px "Liberation Sans", sans-serif; }
.actions span { flex: 1; text-align: center; }
.actions svg { width: 13px; height: 13px; background: #f4f1e8; flex: none; }
.actions i { border: 3px solid transparent; border-top: 4px solid #000080; border-bottom: 0; margin-right: 5px; }
.actions .okb { margin-top: auto; border: 1px solid #1b78d8; box-shadow: inset 0 0 0 1px #64a8ea; }
</style>
